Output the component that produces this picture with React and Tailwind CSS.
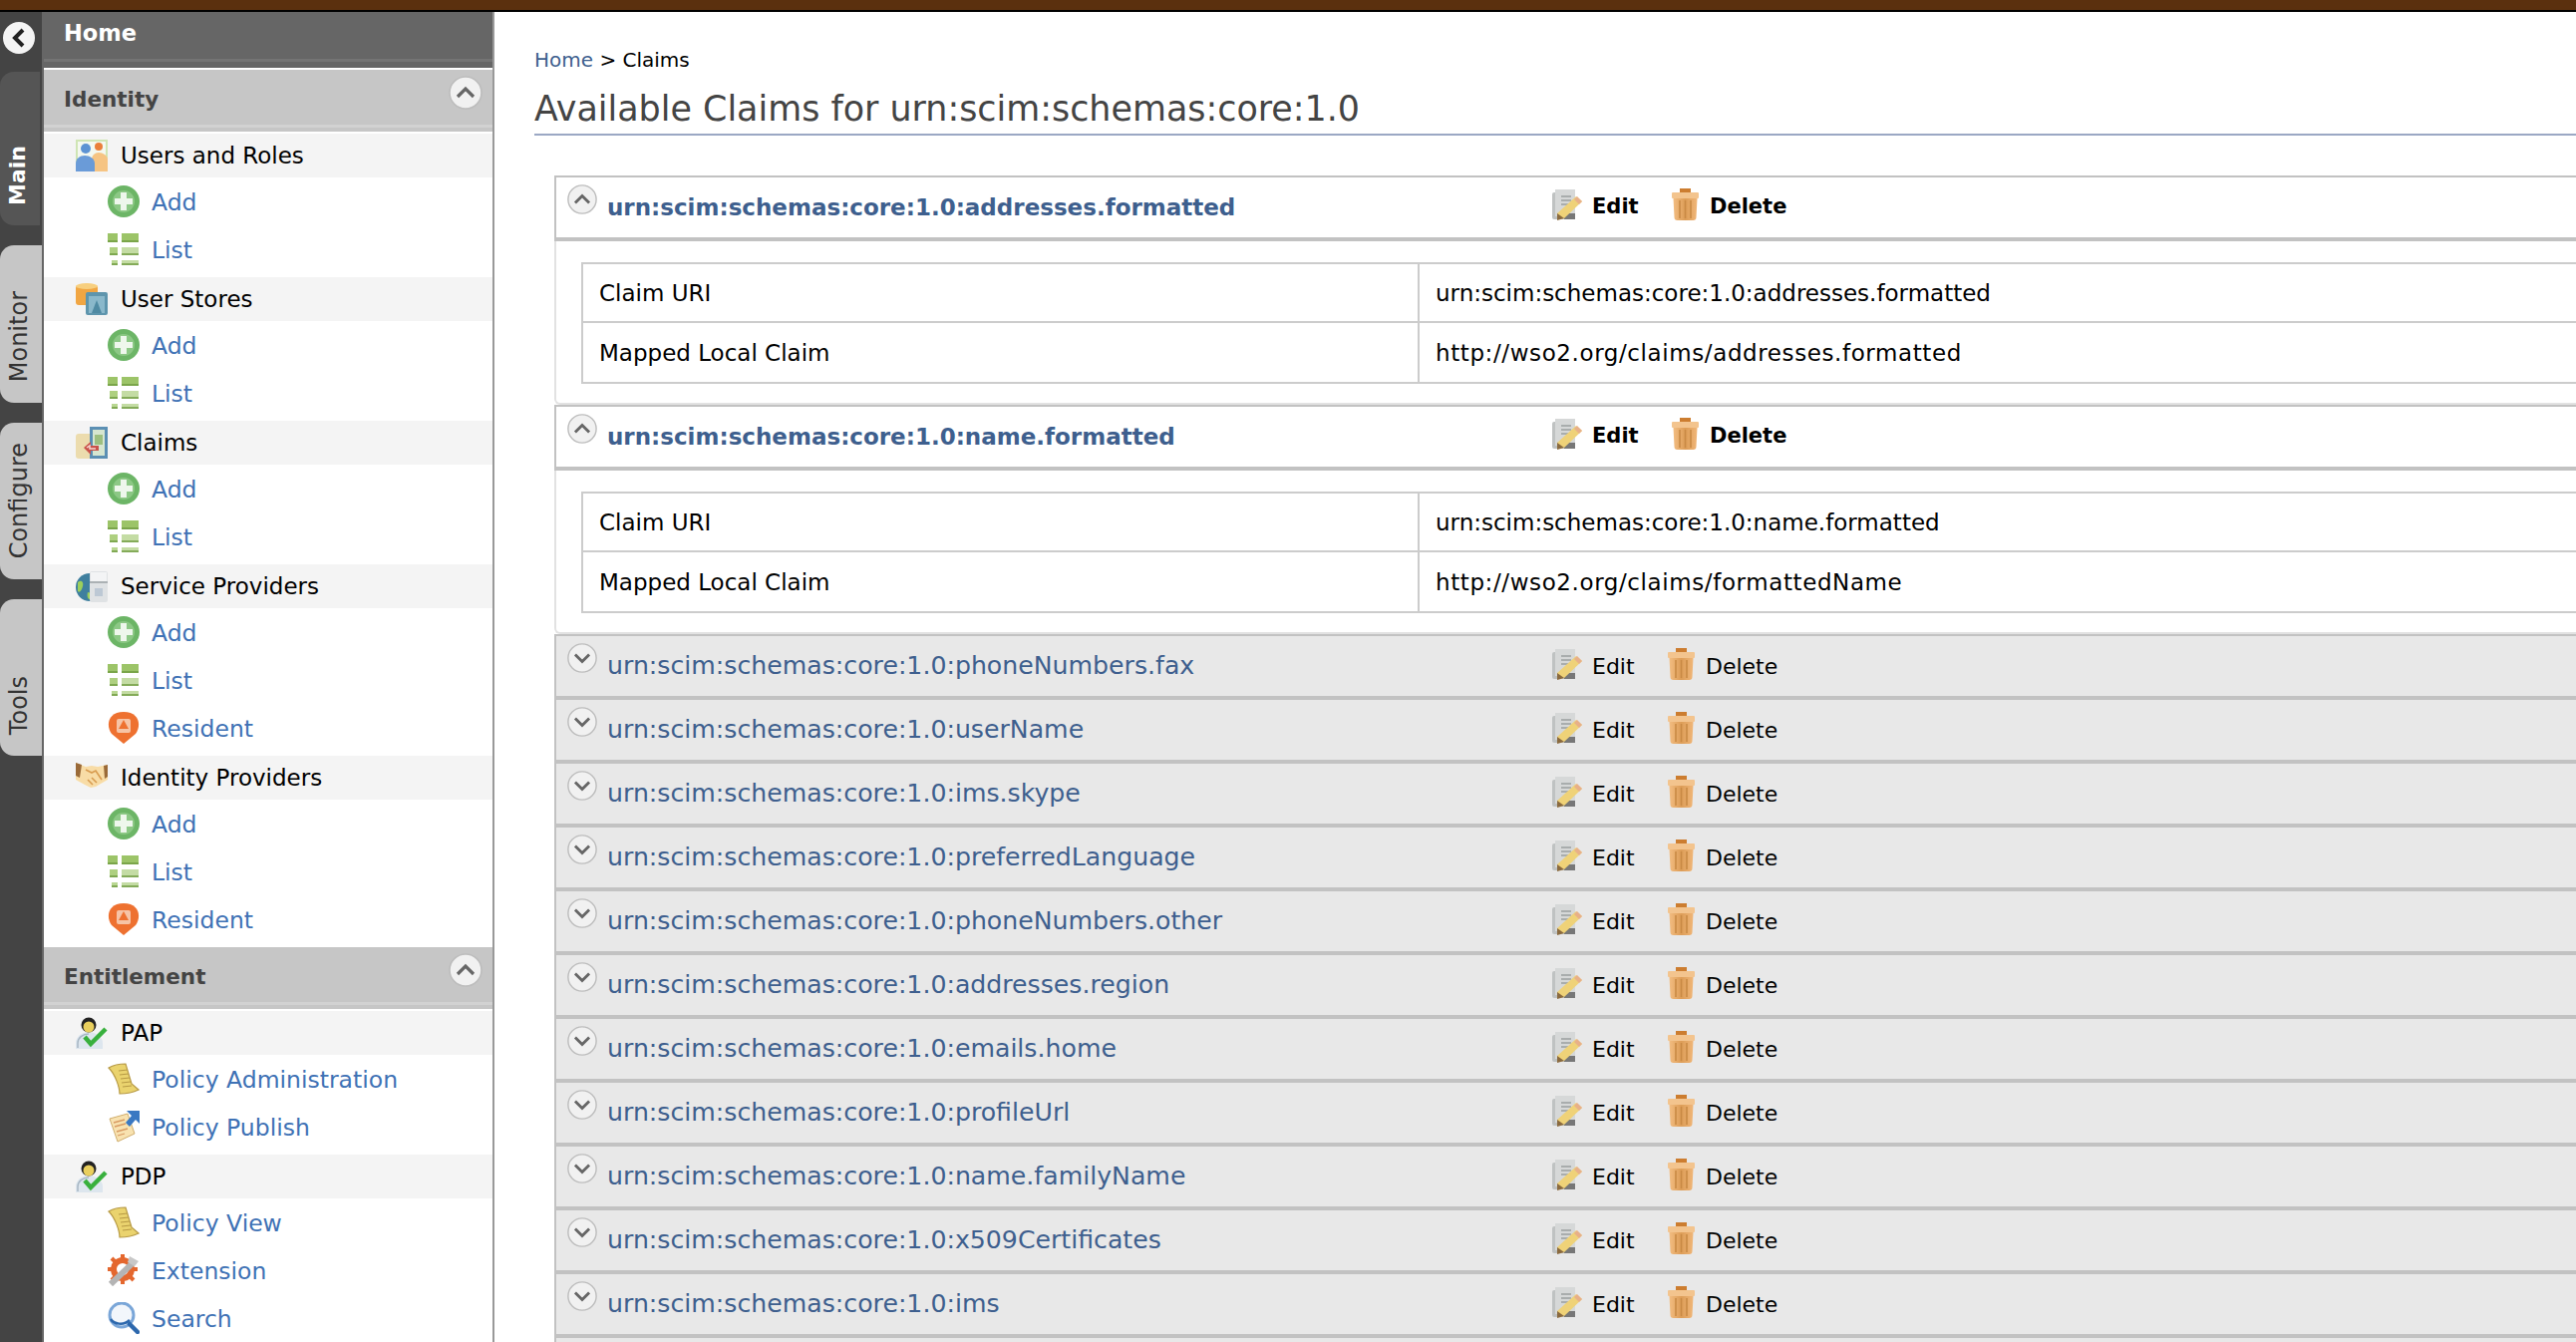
function AddIcon() {
  return (
    <svg width="32" height="32" viewBox="0 0 32 32" className="shrink-0">
      <circle cx="16" cy="16" r="16" fill="#6cb566" />
      <circle cx="16" cy="16" r="11" fill="#8cc885" />
      <path d="M16 7v18M7 16h18" stroke="#eef7ec" strokeWidth="6" />
    </svg>
  );
}

function ListIcon() {
  return (
    <svg width="32" height="32" viewBox="0 0 32 32" className="shrink-0">
      <rect x="0" y="0" width="10" height="9" fill="#9cc468" />
      <rect x="14" y="0" width="17" height="9" fill="#9cc468" />
      <rect x="2" y="14" width="8" height="8" fill="#aed080" />
      <rect x="14" y="14" width="17" height="8" fill="#c4dca4" />
      <rect x="4" y="27" width="6" height="5" fill="#b9d792" />
      <rect x="14" y="27" width="17" height="5" fill="#c4dca4" />
      <path d="M0 8h10M14 8h17M2 21h8M14 21h17M4 31h6M14 31h17" stroke="#6f9a40" strokeWidth="1.5" />
    </svg>
  );
}

function ResidentIcon() {
  return (
    <svg width="32" height="32" viewBox="0 0 32 32" className="shrink-0">
      <path d="M16 32 L4 22 C-2 14 0 0 16 0 C32 0 34 14 28 22 Z" fill="#ee7130" />
      <rect x="9" y="7" width="14" height="14" rx="2" fill="#f6c4a6" />
      <path d="M16 8l5 9H11z" fill="#ee7130" />
    </svg>
  );
}

function UsersIcon() {
  return (
    <svg width="32" height="32" viewBox="0 0 32 32" className="shrink-0">
      <rect width="32" height="32" fill="#cfe5b4" />
      <rect x="2" y="2" width="28" height="28" fill="#f4f8f0" />
      <circle cx="10" cy="9" r="5" fill="#5d93d3" />
      <circle cx="23" cy="7" r="4" fill="#ea7f3a" />
      <path d="M16 32V20c0-4 3-7 7-7s9 3 9 7v12z" fill="#f6c483" />
      <path d="M0 32V24c0-5 4-8 9-8s10 3 10 8v8z" fill="#6a9bd8" />
    </svg>
  );
}

function StoresIcon() {
  return (
    <svg width="32" height="32" viewBox="0 0 32 32" className="shrink-0">
      <rect x="0" y="2" width="22" height="20" rx="3" fill="#f1a643" />
      <ellipse cx="11" cy="3" rx="11" ry="3" fill="#f7cf7f" />
      <rect x="10" y="9" width="22" height="23" rx="2" fill="#5e95ad" />
      <rect x="13" y="13" width="16" height="17" fill="#8ab8cb" />
      <path d="M16 30l5-13 5 13z" fill="#4f8aa3" />
    </svg>
  );
}

function ClaimsIcon() {
  return (
    <svg width="32" height="32" viewBox="0 0 32 32" className="shrink-0">
      <rect x="0" y="7" width="18" height="25" rx="3" fill="#ecdcae" />
      <rect x="14" y="0" width="18" height="32" fill="#5b8fb3" />
      <rect x="17" y="3" width="12" height="26" fill="#d6e6d0" />
      <rect x="19" y="8" width="8" height="10" fill="#9cbf7f" />
      <path d="M8 21l7-6v4h8v5h-8v4z" fill="#c9514a" />
      <path d="M11 21l3-2v3h6" stroke="#f6d6d0" strokeWidth="1.5" fill="none" />
    </svg>
  );
}

function ProvidersIcon() {
  return (
    <svg width="32" height="32" viewBox="0 0 32 32" className="shrink-0">
      <circle cx="14" cy="17" r="14" fill="#3f7f9e" />
      <path d="M2 12c4-3 6 0 5 4s-3 7-5 5zM12 22c3 0 4 3 2 7-2 0-3-3-2-7z" fill="#9ccf5c" />
      <rect x="14" y="1" width="18" height="31" rx="2" fill="#dfe2e4" />
      <rect x="15" y="2" width="16" height="9" fill="#f3f4f5" />
      <path d="M14 12h18" stroke="#9aa1a5" strokeWidth="1.5" />
      <rect x="19" y="18" width="8" height="8" fill="#bcc8d4" />
    </svg>
  );
}

function HandshakeIcon() {
  return (
    <svg width="32" height="32" viewBox="0 0 32 32" className="shrink-0">
      <path d="M0 1l10 4 6-1 6 1 10-2v15l-7 4-5 3-5 1-6-3-9-5z" fill="#f8dca6" />
      <path d="M0 1l6 2-2 13-4-2zM32 3l-4 1 1 13 3-2z" fill="#9a6a38" />
      <path d="M10 8l6 3 4-2 6 9M12 18l5 5M16 16l5 5" stroke="#d89c50" strokeWidth="1.6" fill="none" />
    </svg>
  );
}

function PersonCheckIcon() {
  return (
    <svg width="32" height="32" viewBox="0 0 32 32" className="shrink-0">
      <path d="M0 32v-6c0-6 6-11 13-11s14 5 14 11v6z" fill="#dde6ee" />
      <path d="M2 31v-5c0-5 5-9 11-9" stroke="#a8b7c4" strokeWidth="1.5" fill="none" />
      <circle cx="13" cy="8" r="7.5" fill="#222" />
      <circle cx="13" cy="10" r="5.5" fill="#e9cf5d" />
      <path d="M9 20l6 7 15-15" stroke="#38b03d" strokeWidth="4.5" fill="none" />
    </svg>
  );
}

function ScrollIcon() {
  return (
    <svg width="32" height="32" viewBox="0 0 32 32" className="shrink-0">
      <path d="M1 5c5-3 13-4 17-4l6 20 7 6c-6 3-14 4-19 4C12 25 8 12 1 5z" fill="#ead36e" stroke="#b79a45" strokeWidth="1.2" />
      <path d="M11 8l9-1M12 12l9-1M13 16l9-1M14 20l9-1M15 24l9-1" stroke="#b79a45" strokeWidth="1.2" />
    </svg>
  );
}

function PublishIcon() {
  return (
    <svg width="32" height="32" viewBox="0 0 32 32" className="shrink-0">
      <path d="M2 8l18-5 7 20-17 8z" fill="#f8e2b0" stroke="#d0ad6c" strokeWidth="1" />
      <path d="M6 12l11-3M7 16l11-3M9 21l11-3M10 25l7-2" stroke="#d89a62" strokeWidth="1.3" />
      <path d="M19 0h13v13l-4-4-6 7-4-4 6-7z" fill="#3a78c2" />
    </svg>
  );
}

function ExtensionIcon() {
  return (
    <svg width="32" height="32" viewBox="0 0 32 32" className="shrink-0">
      <circle cx="15" cy="15" r="9" fill="none" stroke="#e4672e" strokeWidth="6" />
      <path d="M15 0v6M15 24v6M0 15h6M24 15h6M4 4l4 4M22 22l4 4M4 26l4-4" stroke="#e4672e" strokeWidth="4" />
      <path d="M3 30L27 7" stroke="#b4b4b4" strokeWidth="6" />
      <path d="M22 2l9 5-4 5-7-4z" fill="#c8c8c8" />
    </svg>
  );
}

function SearchIcon() {
  return (
    <svg width="32" height="32" viewBox="0 0 32 32" className="shrink-0">
      <circle cx="14" cy="13" r="12" fill="#f2f6fb" stroke="#7aa6d8" strokeWidth="3" />
      <path d="M3 17c3 5 13 7 19 1" stroke="#2d68ad" strokeWidth="2.5" fill="none" />
      <path d="M22 22l8 8" stroke="#2d68ad" strokeWidth="4.5" strokeLinecap="round" />
    </svg>
  );
}

function EditIcon() {
  return (
    <svg width="31" height="31" viewBox="0 0 31 31" className="shrink-0">
      <rect x="0" y="3" width="20" height="27" rx="2" fill="#bfc2c2" />
      <rect x="3" y="0" width="20" height="27" fill="#d6d8d8" />
      <path d="M9 7h10M9 11h10M9 15h7" stroke="#9a9e9e" strokeWidth="1.6" />
      <rect x="12" y="24" width="11" height="6" fill="#777" />
      <path d="M5 24L24 7l6 5-18 17-7 1z" fill="#efd278" />
      <path d="M25 7l5 5-3 3-5-5z" fill="#e8b088" />
      <path d="M5 24l7 5-7 2z" fill="#8a6a3f" />
    </svg>
  );
}

function TrashIcon() {
  return (
    <svg width="27" height="32" viewBox="0 0 27 32" className="shrink-0">
      <defs>
        <linearGradient id="trashBody" x1="0" y1="0" x2="1" y2="0">
          <stop offset="0" stopColor="#f2bd82" />
          <stop offset="0.5" stopColor="#dd9d57" />
          <stop offset="1" stopColor="#f0b678" />
        </linearGradient>
      </defs>
      <rect x="8" y="0" width="11" height="5" fill="#cc7d30" />
      <rect x="0" y="4" width="27" height="6" rx="1" fill="#f3c48e" />
      <path d="M1.500 10h24l-1 19a3 3 0 0 1-3 3H5.500a3 3 0 0 1-3-3z" fill="url(#trashBody)" />
      <path d="M8 12v18M13.500 12v18M19 12v18" stroke="#c98a45" strokeWidth="1.6" />
    </svg>
  );
}

function Chevron({ up, big }) {
  return (
    <svg width={big ? 34 : 30} height={big ? 34 : 32} viewBox="0 0 34 34" className="shrink-0">
      <circle cx="17" cy="17" r="16" fill="#f1f1f1" stroke="#bdbdbd" strokeWidth="1.6" />
      <path d={up ? 'M9 21l8-8 8 8' : 'M9 13l8 8 8-8'} stroke="#666" strokeWidth="3.2" fill="none" />
    </svg>
  );
}

function RailTab({ label, active, height }) {
  return (
    <div
      className={`flex flex-col justify-end items-center rounded-l-[14px] pr-[4px] ${height} ${
        active ? 'w-[40px] pb-[20px] bg-[#555] text-white font-bold text-[22px]' : 'w-[42px] pb-[21px] bg-[#c6c6c6] text-[#333] text-[24px]'
      }`}
    >
      <span className="leading-none [writing-mode:vertical-rl] rotate-180">{label}</span>
    </div>
  );
}

function SectionHeader({ title }) {
  return (
    <div className="relative h-[62px] bg-[#c6c6c6] pl-[20px] pt-[16px] mb-[2px]">
      <span className="text-[21.500px] leading-[28px] font-bold text-[#444]">{title}</span>
      <div className="absolute left-0 right-0 bottom-[4px] h-[3px] bg-[#d2d2d2]" />
      <div className="absolute right-[10px] top-[6px]">
        <Chevron up big />
      </div>
    </div>
  );
}

function MenuGroup({ icon, label, items }) {
  return (
    <div className="pb-[4px]">
      <div className="flex items-center h-[44px] bg-[#f4f4f4] pl-[32px] gap-[13px]">
        {icon}
        <span className="text-[23px] text-black">{label}</span>
      </div>
      {items.map(function(item, i) {
        return (
          <div key={i} className="flex items-center h-[48px] pl-[64px] gap-[12px]">
            {item.icon}
            <span className="text-[23.500px] pt-[4px] text-[#3f72b5]">{item.label}</span>
          </div>
        );
      })}
    </div>
  );
}

function RowActions({ bold }) {
  return (
    <div className={`flex items-center text-black ${bold ? 'font-bold text-[21px]' : 'text-[22px]'}`}>
      <div className="mt-[-2px]">
        <EditIcon />
      </div>
      <span className={`ml-[9px] pt-[2px] ${bold ? 'w-[80px]' : 'w-[76px]'}`}>Edit</span>
      <div className="mt-[-3px]">
        <TrashIcon />
      </div>
      <span className="ml-[11px] pt-[2px]">Delete</span>
    </div>
  );
}

function ClaimRow({ name, open }) {
  return (
    <div
      className={`flex items-start pl-[11px] border-l-2 border-b-4 border-[#c2c2c2] ${
        open ? 'bg-white border-t-2 h-[66px]' : 'bg-[#e8e8e8] h-[64px]'
      }`}
    >
      <div className="mt-[6px]">
        <Chevron up={open} />
      </div>
      <span
        className={`ml-[10px] w-[948px] shrink-0 mt-[14px] leading-[32px] text-[#3e5f8e] ${
          open ? 'font-bold text-[23px]' : 'text-[25.200px]'
        }`}
      >
        {name}
      </span>
      <div className="mt-[12px]">
        <RowActions bold={open} />
      </div>
    </div>
  );
}

function ClaimDetail({ uri, local }) {
  return (
    <div className="pl-[25px] pt-[21px] border-l-2 border-b-2 border-[#e2e2e2] rounded-bl-[6px] h-[164px]">
      <div className="border-t-2 border-l-2 border-b-2 border-[#ccc] text-[23px] text-black">
        <div className="grid grid-cols-[839px_1fr] h-[59px] border-b-2 border-[#ccc]">
          <div className="flex items-center pl-[16px] pt-[2px] border-r-2 border-[#ccc]">Claim URI</div>
          <div className="flex items-center pl-[16px] pt-[2px]">{uri}</div>
        </div>
        <div className="grid grid-cols-[839px_1fr] h-[59px]">
          <div className="flex items-center pl-[16px] pt-[1px] border-r-2 border-[#ccc]">Mapped Local Claim</div>
          <div className="flex items-center pl-[16px] pt-[1px] tracking-[0.6px]">{local}</div>
        </div>
      </div>
    </div>
  );
}

const plainRows = [
  'phoneNumbers.fax',
  'userName',
  'ims.skype',
  'preferredLanguage',
  'phoneNumbers.other',
  'addresses.region',
  'emails.home',
  'profileUrl',
  'name.familyName',
  'x509Certificates',
  'ims',
];

export default function App() {
  const add = { icon: <AddIcon />, label: 'Add' };
  const list = { icon: <ListIcon />, label: 'List' };
  const resident = { icon: <ResidentIcon />, label: 'Resident' };

  return (
    <div className="flex flex-col w-[2584px] h-[1346px] overflow-hidden bg-white font-['DejaVu_Sans',sans-serif]">
      <div className="h-[12px] shrink-0 bg-[#5b300e] border-b-2 border-black" />
      <div className="flex flex-1 min-h-0">
        <div className="w-[44px] shrink-0 flex flex-col gap-[20px] bg-[#444] border-r-2 border-[#666]">
          <div className="h-[40px] pt-[10px] pl-[3px]">
            <svg width="32" height="32" viewBox="0 0 32 32">
              <circle cx="16" cy="16" r="16" fill="#f4f4f4" />
              <path d="M20 8l-8 8 8 8" stroke="#222" strokeWidth="4" fill="none" />
            </svg>
          </div>
          <RailTab label="Main" active height="h-[154px]" />
          <RailTab label="Monitor" height="h-[158px]" />
          <RailTab label="Configure" height="h-[157px]" />
          <RailTab label="Tools" height="h-[157px]" />
        </div>

        <div className="w-[452px] shrink-0 border-r-2 border-[#999]">
          <div className="relative h-[56px] bg-[#666] pl-[20px] pt-[7px] mb-[2px]">
            <span className="text-[22.500px] leading-[28px] font-bold text-white">Home</span>
            <div className="absolute left-0 right-0 bottom-[6px] h-[3px] bg-[#747474]" />
          </div>
          <SectionHeader title="Identity" />
          <MenuGroup icon={<UsersIcon />} label="Users and Roles" items={[add, list]} />
          <MenuGroup icon={<StoresIcon />} label="User Stores" items={[add, list]} />
          <MenuGroup icon={<ClaimsIcon />} label="Claims" items={[add, list]} />
          <MenuGroup icon={<ProvidersIcon />} label="Service Providers" items={[add, list, resident]} />
          <MenuGroup icon={<HandshakeIcon />} label="Identity Providers" items={[add, list, resident]} />
          <SectionHeader title="Entitlement" />
          <MenuGroup
            icon={<PersonCheckIcon />}
            label="PAP"
            items={[
              { icon: <ScrollIcon />, label: 'Policy Administration' },
              { icon: <PublishIcon />, label: 'Policy Publish' },
            ]}
          />
          <MenuGroup
            icon={<PersonCheckIcon />}
            label="PDP"
            items={[
              { icon: <ScrollIcon />, label: 'Policy View' },
              { icon: <ExtensionIcon />, label: 'Extension' },
              { icon: <SearchIcon />, label: 'Search' },
            ]}
          />
        </div>

        <div className="flex-1 min-w-0 pl-[40px] pt-[36px]">
          <div className="text-[20px] leading-[24px]">
            <span className="text-[#3e5f8e]">Home</span>
            <span className="text-black"> &gt; Claims</span>
          </div>
          <h1 className="mt-[14px] h-[50px] pt-[1px] text-[34.900px] leading-[44px] text-[#444] border-b-2 border-[#9ba8c4]">
            Available Claims for urn:scim:schemas:core:1.0
          </h1>
          <div className="pl-[20px] pt-[40px]">
            <ClaimRow name="urn:scim:schemas:core:1.0:addresses.formatted" open />
            <ClaimDetail
              uri="urn:scim:schemas:core:1.0:addresses.formatted"
              local="http://wso2.org/claims/addresses.formatted"
            />
            <ClaimRow name="urn:scim:schemas:core:1.0:name.formatted" open />
            <ClaimDetail
              uri="urn:scim:schemas:core:1.0:name.formatted"
              local="http://wso2.org/claims/formattedName"
            />
            <div className="h-[2px] bg-[#c2c2c2]" />
            {plainRows.map(function(row) {
              return <ClaimRow key={row} name={'urn:scim:schemas:core:1.0:' + row} />;
            })}
            <div className="h-[64px] bg-[#e8e8e8] border-l-2 border-[#c2c2c2]" />
          </div>
        </div>
      </div>
    </div>
  );
}
